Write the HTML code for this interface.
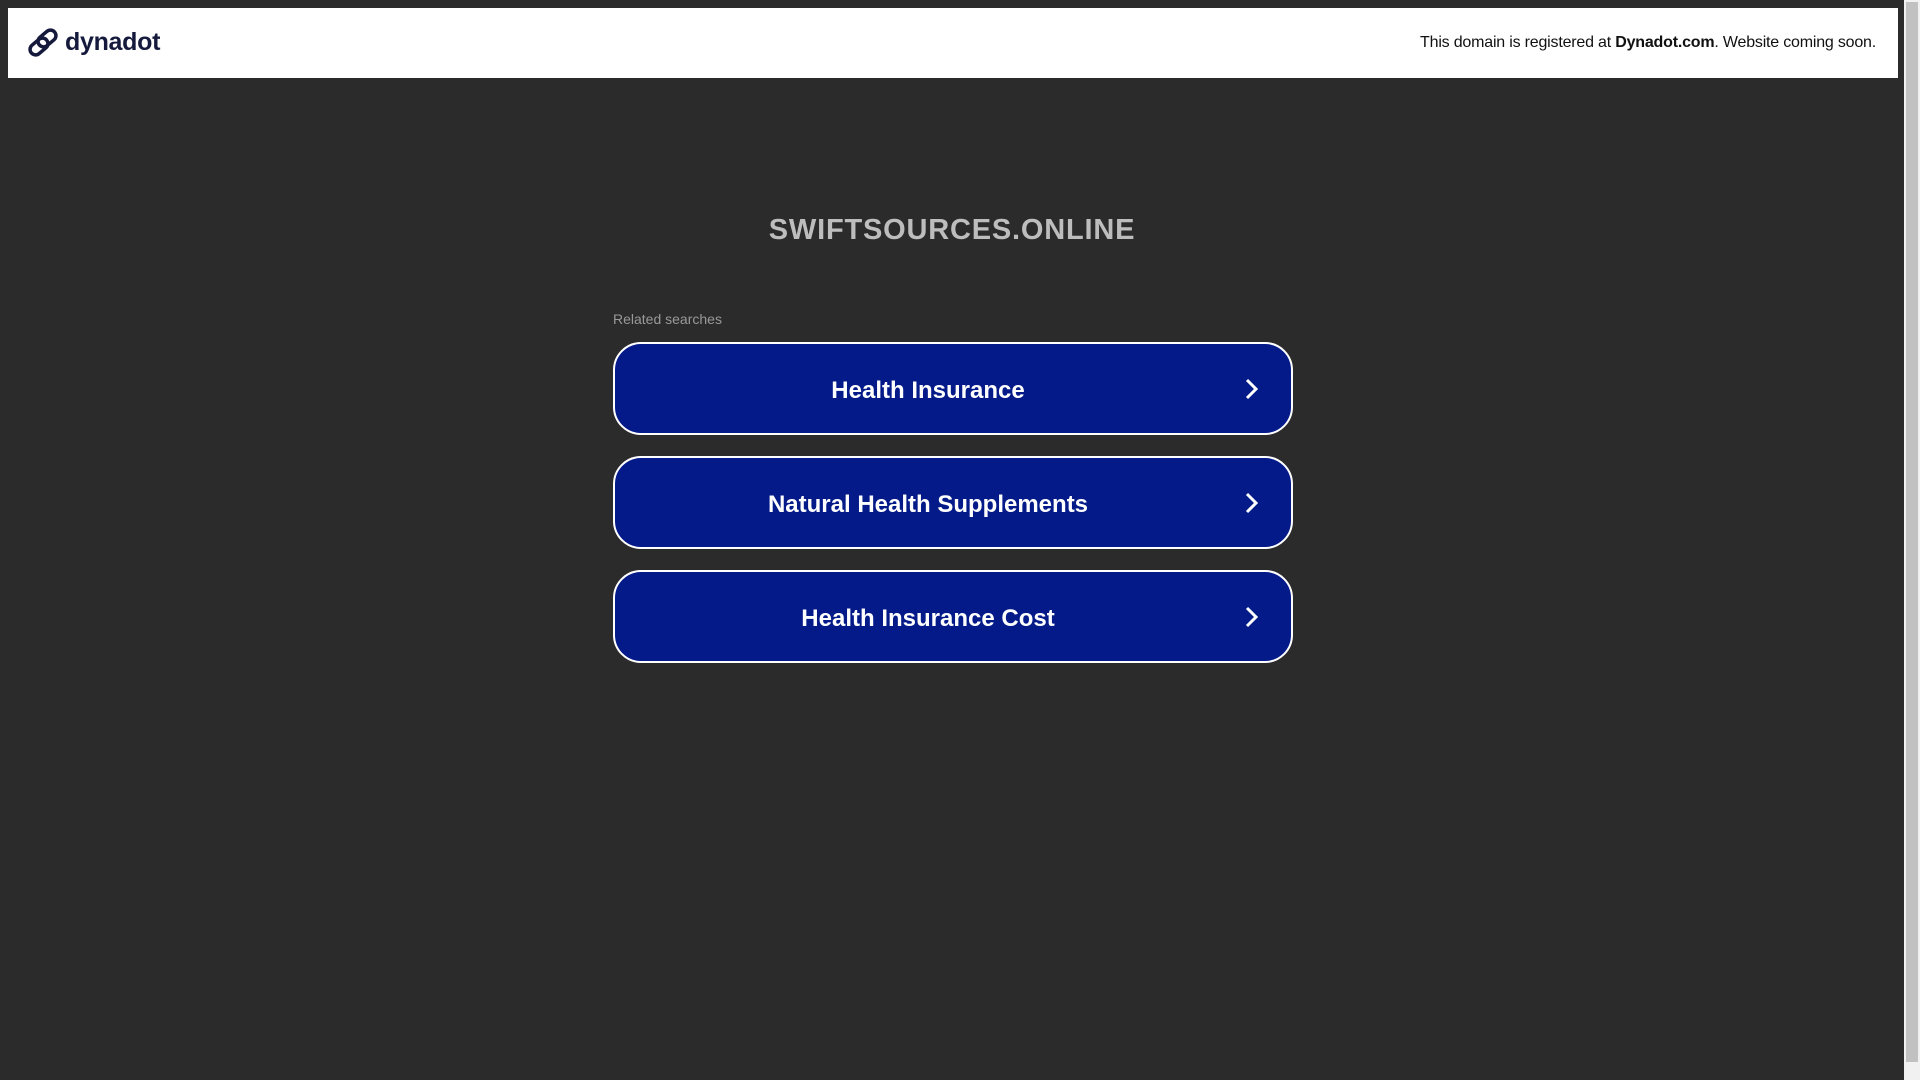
<!DOCTYPE html>
<html><head><style>
html,body{margin:0;padding:0;}
body{width:1920px;height:1080px;background:#2b2b2b;position:relative;overflow:hidden;font-family:"Liberation Sans",Arial,sans-serif;}
.hdr{position:absolute;left:8px;top:8px;width:1890px;height:70px;background:#fff;}
.logo{position:absolute;left:27px;top:27px;}
.logotxt{position:absolute;left:65px;top:28px;font-size:25px;font-weight:bold;color:#151a3d;letter-spacing:-0.3px;}
.note{position:absolute;right:44px;top:34px;font-size:16px;color:#111;letter-spacing:-0.2px;}
.sb{position:absolute;left:1904px;top:0;width:16px;height:1080px;background:#f1f1f1;}
.sb .t{position:absolute;left:2px;top:2px;width:12px;height:1060px;background:#c1c1c1;}
.title{position:absolute;left:0;width:1904px;top:214px;text-align:center;font-size:29px;font-weight:bold;color:#bdbdbd;letter-spacing:0.8px;}
.rel{position:absolute;left:613px;top:311px;font-size:14px;color:#999;}
.btn{position:absolute;left:613px;width:676px;height:89px;border:2px solid #fff;border-radius:28px;background:#031a88;color:#fff;font-size:24px;font-weight:bold;}
.btn span{position:absolute;left:0;width:626px;top:33px;text-align:center;}
.btn svg{position:absolute;left:629px;top:33px;}
</style></head><body>
<div class="hdr"></div>
<svg class="logo" width="32" height="32" viewBox="0 0 32 32"><g fill="none" stroke="#151a3d" stroke-width="3.5" stroke-linecap="round"><rect x="2" y="14" width="20" height="11" rx="5.5" transform="rotate(-40 12 19.5)"/><rect x="10" y="6" width="20" height="11" rx="5.5" transform="rotate(-40 20 11.5)"/></g></svg>
<div class="logotxt">dynadot</div>
<div class="note">This domain is registered at <b>Dynadot.com</b>. Website coming soon.</div>
<div class="sb"><div class="t"></div></div>
<div class="title">SWIFTSOURCES.ONLINE</div>
<div class="rel">Related searches</div>
<div class="btn" style="top:342px"><span>Health Insurance</span><svg width="16" height="24" viewBox="0 0 16 24"><path d="M3 3 L12 12 L3 21" fill="none" stroke="#fff" stroke-width="3"/></svg></div>
<div class="btn" style="top:456px"><span>Natural Health Supplements</span><svg width="16" height="24" viewBox="0 0 16 24"><path d="M3 3 L12 12 L3 21" fill="none" stroke="#fff" stroke-width="3"/></svg></div>
<div class="btn" style="top:570px"><span>Health Insurance Cost</span><svg width="16" height="24" viewBox="0 0 16 24"><path d="M3 3 L12 12 L3 21" fill="none" stroke="#fff" stroke-width="3"/></svg></div>
</body></html>
